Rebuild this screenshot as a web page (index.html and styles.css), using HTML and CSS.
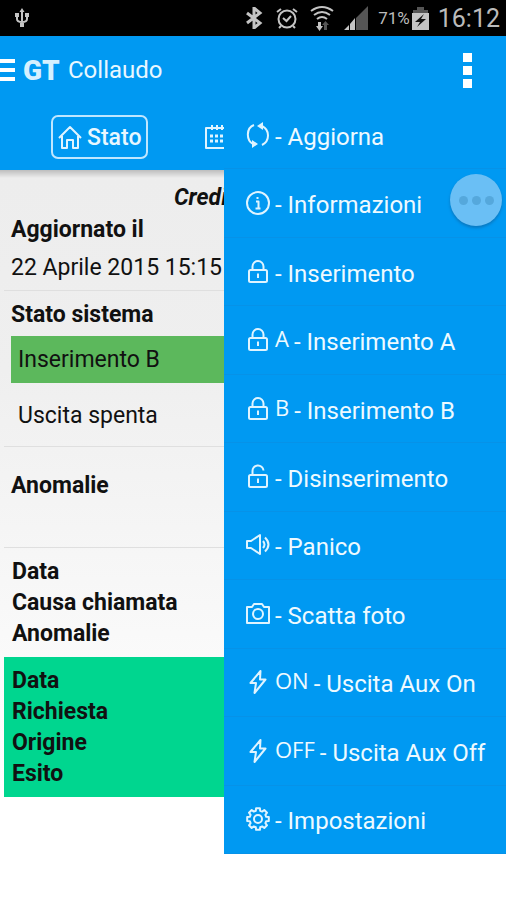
FILE: index.html
```html
<!DOCTYPE html>
<html lang="it">
<head>
<meta charset="utf-8">
<meta name="viewport" content="width=device-width, initial-scale=1">
<title>Collaudo</title>
<link rel="stylesheet" href="styles.css">
</head>
<body>
<svg class="defs" aria-hidden="true">
  <symbol id="lock" viewBox="0 0 24 24"><rect x="3" y="10" width="18" height="12" rx="1.5"/><path d="M6.500 10V6.500a5.500 5.500 0 0 1 11 0V10M12 14v4M11 14.500h2"/></symbol>
  <symbol id="bolt" viewBox="0 0 24 24"><path d="M14.500 1 4.500 13h5.500L8.500 23 19.500 9.500H14z"/></symbol>
</svg>
<div class="screen">
  <div class="status">
    <svg class="usb" viewBox="0 0 14 20"><path class="line" d="M7 3v16M2 7v4q0 3 5 3 5 0 5-3V7"/><path d="M4.500 4 7 0l2.500 4zM0 5h4v4H0zM10 5h4v4h-4zM5 15h4v4H5z"/></svg>
    <div class="status-right">
      <svg class="bluetooth" width="18" height="22" viewBox="0 0 18 22"><path class="line" d="m2 6 13 10-6 5V1l6 5L2 16"/></svg>
      <svg class="alarm" width="22" height="22" viewBox="0 0 22 22"><circle class="line" cx="11" cy="12" r="8.500"/><path class="line" d="m7 11 3.500 3L15 9M1 5l4-3M21 5l-4-3M5 19l-2 2M17 19l2 2"/></svg>
      <svg class="wifi" width="24" height="26" viewBox="0 0 24 26"><path class="line" d="M1 6q11-8 22 0M4 10q8-6 16 0M7 14q5-4 10 0"/><path d="M8 17h3v4h2l-3.500 5L6 21h2z"/><path class="dim" d="M14 25v-5h-2l3.500-4 3.500 4h-2v5z"/></svg>
      <svg class="signal" width="24" height="24" viewBox="0 0 24 24"><path class="dim" d="M12 12 24 0v24H12z"/><path d="m0 24 5-5v5zM6 18l5-6v12H6z"/></svg>
      <span class="percent">71%</span>
      <svg class="battery" width="17" height="24" viewBox="0 0 17 24"><path class="dim" d="M5 1h7v3h4v4H1V4h4z"/><path d="M0 7h17v17H0z"/><path class="flash" d="m12 8-9 8h5l-3 5 9-8H9z"/></svg>
      <span class="clock">16:12</span>
    </div>
  </div>
  <header class="appbar">
    <button class="drawer" aria-label="Menu"><i></i><i></i><i></i></button>
    <span class="logo">GT</span>
    <h1>Collaudo</h1>
    <button class="more" aria-label="Altro"><i></i><i></i><i></i></button>
  </header>
  <nav class="tabs">
    <a class="tab active" href="#stato"><svg class="icon" viewBox="0 0 24 24"><path d="M1 13 12 2l11 11M4 11v12h5v-8h6v8h5V11"/></svg>Stato</a>
    <a class="tab" href="#eventi" aria-label="Eventi"><svg class="icon" viewBox="0 0 24 24"><path d="M1 3h22v20H1zM7 0v5M12 0v5M17 0v5"/><path class="dots" d="M5 11h3M10 11h3M15 11h3M5 16h3M10 16h3M15 16h3"/></svg></a>
  </nav>
  <main id="stato">
    <p class="credit">Credi</p>
    <section class="updated"><h2>Aggiornato il</h2><p>22 Aprile 2015 15:15</p></section>
    <section class="system"><h2>Stato sistema</h2><p class="armed">Inserimento B</p><p class="output">Uscita spenta</p></section>
    <section class="faults"><h2>Anomalie</h2></section>
    <section class="list"><p>Data</p><p>Causa chiamata</p><p>Anomalie</p></section>
    <section class="list request"><p>Data</p><p>Richiesta</p><p>Origine</p><p>Esito</p></section>
  </main>
  <div class="menu" role="menu">
    <button role="menuitem"><svg class="icon" viewBox="0 0 24 24"><path d="M8 2C0 5 0 17 7 21M16 3c8 4 8 15 0 19"/><path class="fill" d="m11 3 6-4v8zM12 21l-6 4v-8z"/></svg><span>- Aggiorna</span></button>
    <button role="menuitem"><svg class="icon" viewBox="0 0 24 24"><circle cx="12" cy="12" r="11"/><path d="M10 10.500h2.500V17M9.500 17.500h5M11.500 6v2"/></svg><span>- Informazioni</span></button>
    <button role="menuitem"><svg class="icon"><use href="#lock"/></svg><span>- Inserimento</span></button>
    <button role="menuitem"><svg class="icon"><use href="#lock"/></svg><b>A</b><span>- Inserimento A</span></button>
    <button role="menuitem"><svg class="icon"><use href="#lock"/></svg><b>B</b><span>- Inserimento B</span></button>
    <button role="menuitem"><svg class="icon" viewBox="0 0 24 24"><rect x="3" y="10" width="18" height="12" rx="1.500"/><path d="M6.500 10V6.500a5.500 5.500 0 0 1 11-1M12 14v4M11 14.500h2"/></svg><span>- Disinserimento</span></button>
    <button role="menuitem"><svg class="icon" viewBox="0 0 24 24"><path d="M1 8h4l9-6v19l-9-6H1zM17 8q3 3.500 0 7M19 4.500q7 7 0 14"/></svg><span>- Panico</span></button>
    <button role="menuitem"><svg class="icon" viewBox="0 0 24 24"><path d="M1 5h5l2-3h8l2 3h5v16H1z"/><circle cx="12" cy="12" r="5"/></svg><span>- Scatta foto</span></button>
    <button role="menuitem"><svg class="icon"><use href="#bolt"/></svg><b>ON</b><span>- Uscita Aux On</span></button>
    <button role="menuitem"><svg class="icon"><use href="#bolt"/></svg><b>OFF</b><span>- Uscita Aux Off</span></button>
    <button role="menuitem"><svg class="icon" viewBox="-12 -12 24 24"><path d="M-1.900-10.800h3.800L2.200-8.200 4.200-7.400 6.300-9 9-6.300 7.400-4.200 8.200-2.200 10.800-1.900v3.800L8.200 2.200 7.400 4.200 9 6.300 6.300 9 4.200 7.400 2.200 8.200 1.900 10.800h-3.800L-2.200 8.200-4.200 7.400-6.300 9-9 6.300-7.400 4.200-8.200 2.200-10.800 1.900v-3.800L-8.200-2.200-7.400-4.200-9-6.300-6.300-9-4.200-7.400-2.200-8.200z"/><circle r="4"/></svg><span>- Impostazioni</span></button>
  </div>
  <button class="assist" aria-label="Menu rapido"><i></i><i></i><i></i></button>
</div>
</body>
</html>
```

FILE: styles.css
```css
* { box-sizing: border-box; }
body, h1, h2, p { margin: 0; }
body { background: #fff; color: #111; font: 400 23px/31px Roboto, sans-serif; }
button { margin: 0; padding: 0; border: 0; background: none; color: inherit; font: inherit; }
.defs { position: absolute; width: 0; height: 0; }
.screen { position: relative; min-height: 100vh; overflow: hidden; }

.status { display: flex; justify-content: space-between; align-items: center; height: 36px; padding: 0 6px 0 15px; background: #000; color: #bbb; }
.status svg { flex: none; fill: #c4c4c4; }
.status .line { fill: none; stroke: #c4c4c4; stroke-width: 2; }
.status .bluetooth .line { stroke-width: 3; }
.status .dim { fill: #555; }
.status .flash { fill: #111; }
.usb { width: 14px; height: 20px; }
.status-right { display: flex; align-items: center; }
.alarm { margin-left: 13px; }
.wifi { margin-left: 12px; }
.signal { margin-left: 10px; }
.percent { margin-left: 10px; font-size: 17px; }
.battery { margin: 0 9px 0 2px; }
.clock { font-size: 25px; }

.appbar { display: flex; align-items: center; height: 68px; padding-right: 34px; background: #0099f2; color: #e8f7ff; }
.drawer { display: grid; gap: 5px; width: 15px; }
.drawer i { height: 4px; background: #fff; }
.logo { width: 37px; margin: 0 8px; color: #d5f0ff; font-size: 28px; font-weight: 900; }
h1 { font-size: 24px; font-weight: 400; }
.more { display: grid; gap: 4px; margin-left: auto; }
.more i { width: 9px; height: 9px; background: #fff; }

.tabs { display: flex; align-items: center; gap: 57px; height: 66px; padding-left: 51px; background: #0099f2; }
.tab { display: flex; align-items: center; gap: 5px; height: 44px; color: #e8f7ff; font-size: 24px; text-decoration: none; }
.active { padding: 0 5px; border: 2px solid #bfe6ff; border-radius: 7px; font-size: 23px; font-weight: 500; }
.icon { flex: none; width: 24px; height: 24px; overflow: visible; fill: none; stroke: #dff4ff; stroke-width: 2; stroke-linejoin: round; }
.icon .dots { stroke-width: 3; }
.icon .fill { fill: #dff4ff; stroke: none; }

main { padding: 11px 0 0 4px; background: linear-gradient(#bdbdbd, #ededed 8px, #efefef 200px, #fff 620px); }
h2, .credit, .list { font-size: 23px; font-weight: 700; line-height: 31px; }
.credit { padding-left: 170px; font-style: italic; line-height: 33px; }
section { padding-left: 7px; border-bottom: 1px solid #dfdfdf; }
.updated p { padding: 7px 0; }
.system { padding-top: 8px; }
.armed { margin-top: 6px; padding: 8px 7px; background: #5cb85c; }
.output { padding: 17px 7px 15px; }
.faults { padding-top: 23px; padding-bottom: 46px; }
.list { padding: 8px; border: 0; }
.request { background: #00d68f; }

.menu { position: absolute; top: 101px; right: 0; left: 224px; display: grid; grid-auto-rows: 1fr; min-height: 753px; background: #0099f2; color: #eefaff; font-size: 24px; }
.menu button { display: flex; align-items: center; gap: 5px; padding: 0 22px; border-bottom: 1px solid #0692e8; text-align: left; white-space: nowrap; }
.menu span { padding-top: 5px; }
.menu b { padding-bottom: 4px; font: 500 22px/28px "Open Sans", sans-serif; }

.assist { position: absolute; top: 174px; right: 4px; display: flex; justify-content: center; align-items: center; gap: 4px; width: 52px; height: 52px; border-radius: 50%; background: #6abff5; box-shadow: 0 2px 3px #0878c0; }
.assist i { width: 9px; height: 9px; border-radius: 50%; background: #55a8dc; }
```
